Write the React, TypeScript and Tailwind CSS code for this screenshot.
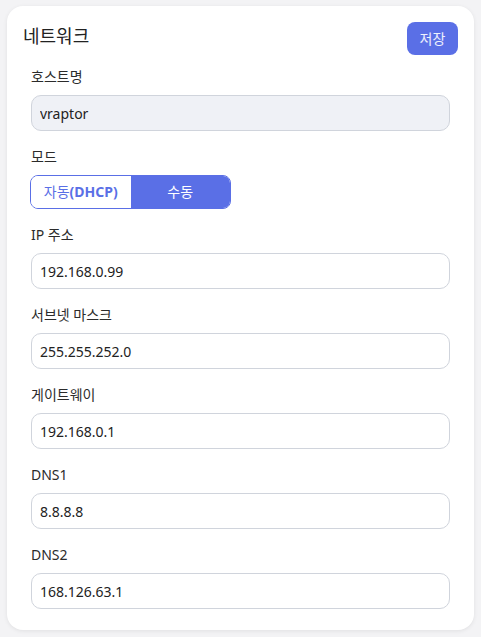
import React from 'react';

const fields = [
  { label: 'IP 주소', value: '192.168.0.99' },
  { label: '서브넷 마스크', value: '255.255.252.0' },
  { label: '게이트웨이', value: '192.168.0.1' },
  { label: 'DNS1', value: '8.8.8.8' },
  { label: 'DNS2', value: '168.126.63.1' },
];

const Field: React.FC<{ label: string; children: React.ReactNode }> = ({ label, children }) => (
  <div className="flex flex-col">
    <label className="mb-2 text-sm leading-5 text-[#2b2b2b]">{label}</label>
    {children}
  </div>
);

export default function App() {
  return (
    <div
      className="min-h-screen bg-[#f3f3f5] px-[7px] pt-[6px] pb-[6px]"
      style={{ fontFamily: '"Noto Sans", "Noto Sans CJK KR", sans-serif' }}
    >
      <div className="rounded-2xl bg-white px-4 pt-4 pb-[21px] shadow-[0_1px_4px_rgba(0,0,0,0.08)]">
        <div className="mb-3 flex items-start justify-between">
          <h2 className="text-lg leading-7 text-[#222]">네트워크</h2>
          <button className="h-[33px] w-[51px] rounded-lg bg-[#5a6fe6] text-sm text-white/90">
            저장
          </button>
        </div>

        <div className="flex flex-col gap-4 px-2">
          <Field label="호스트명">
            <input
              readOnly
              value="vraptor"
              className="h-9 w-full rounded-[10px] border border-[#d0d4dc] bg-[#eff1f6] px-2 text-sm text-[#222] outline-none"
            />
          </Field>

          <Field label="모드">
            <div className="-ml-px flex h-[34px] w-[201px] overflow-hidden rounded-lg border border-[#5a6fe6]">
              <button className="flex-1 bg-white text-sm text-[#5a6fe6]">
                자동<span className="font-bold">(DHCP)</span>
              </button>
              <button className="flex-1 bg-[#5a6fe6] text-sm text-white">수동</button>
            </div>
          </Field>

          {fields.map((f) => (
            <Field key={f.label} label={f.label}>
              <input
                readOnly
                value={f.value}
                className="h-9 w-full rounded-[10px] border border-[#d0d4dc] bg-white px-2 text-sm text-[#222] outline-none"
              />
            </Field>
          ))}
        </div>
      </div>
    </div>
  );
}
